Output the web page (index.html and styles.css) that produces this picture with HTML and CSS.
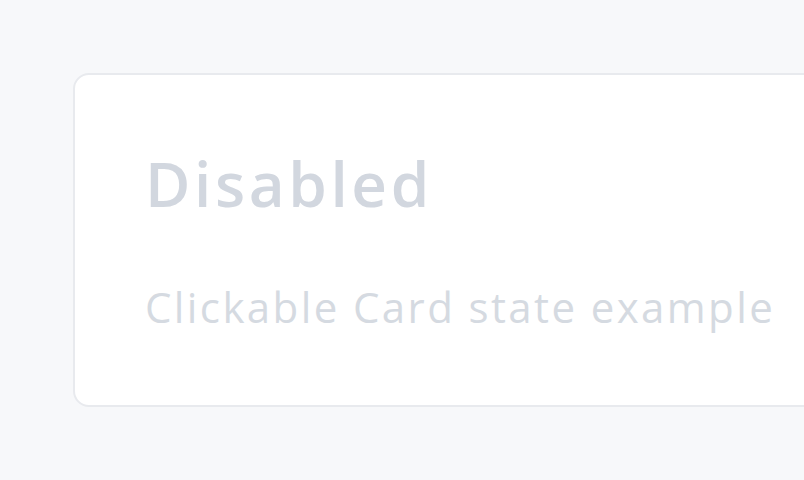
FILE: index.html
```html
<!DOCTYPE html>
<html>
<head>
<meta charset="utf-8">
<link rel="stylesheet" href="styles.css">
</head>
<body>
<div class="page">
  <div class="card">
    <h2 class="card-title">Disabled</h2>
    <p class="card-text">Clickable Card state example</p>
  </div>
</div>
</body>
</html>
```
FILE: styles.css
```css
html, body {
  margin: 0;
  padding: 0;
  background: #f7f8fa;
  overflow: hidden;
}
.page {
  padding: 73px 0 0 73px;
  width: 804px;
  height: 480px;
  box-sizing: border-box;
  overflow: hidden;
}
.card {
  width: 800px;
  height: 334px;
  box-sizing: border-box;
  background: #ffffff;
  border: 2px solid #e8eaee;
  border-radius: 16px;
  padding: 73px 0 0 70px;
  font-family: "Open Sans", "Noto Sans", sans-serif;
}
.card-title {
  margin: 0;
  font-size: 62px;
  line-height: 70px;
  font-weight: 600;
  color: #d2d7df;
  letter-spacing: 3.6px;
  white-space: nowrap;
}
.card-text {
  margin: 64px 0 0 0;
  font-size: 42px;
  line-height: 50px;
  font-weight: 400;
  color: #d5dae1;
  letter-spacing: 2.4px;
  white-space: nowrap;
}
```
